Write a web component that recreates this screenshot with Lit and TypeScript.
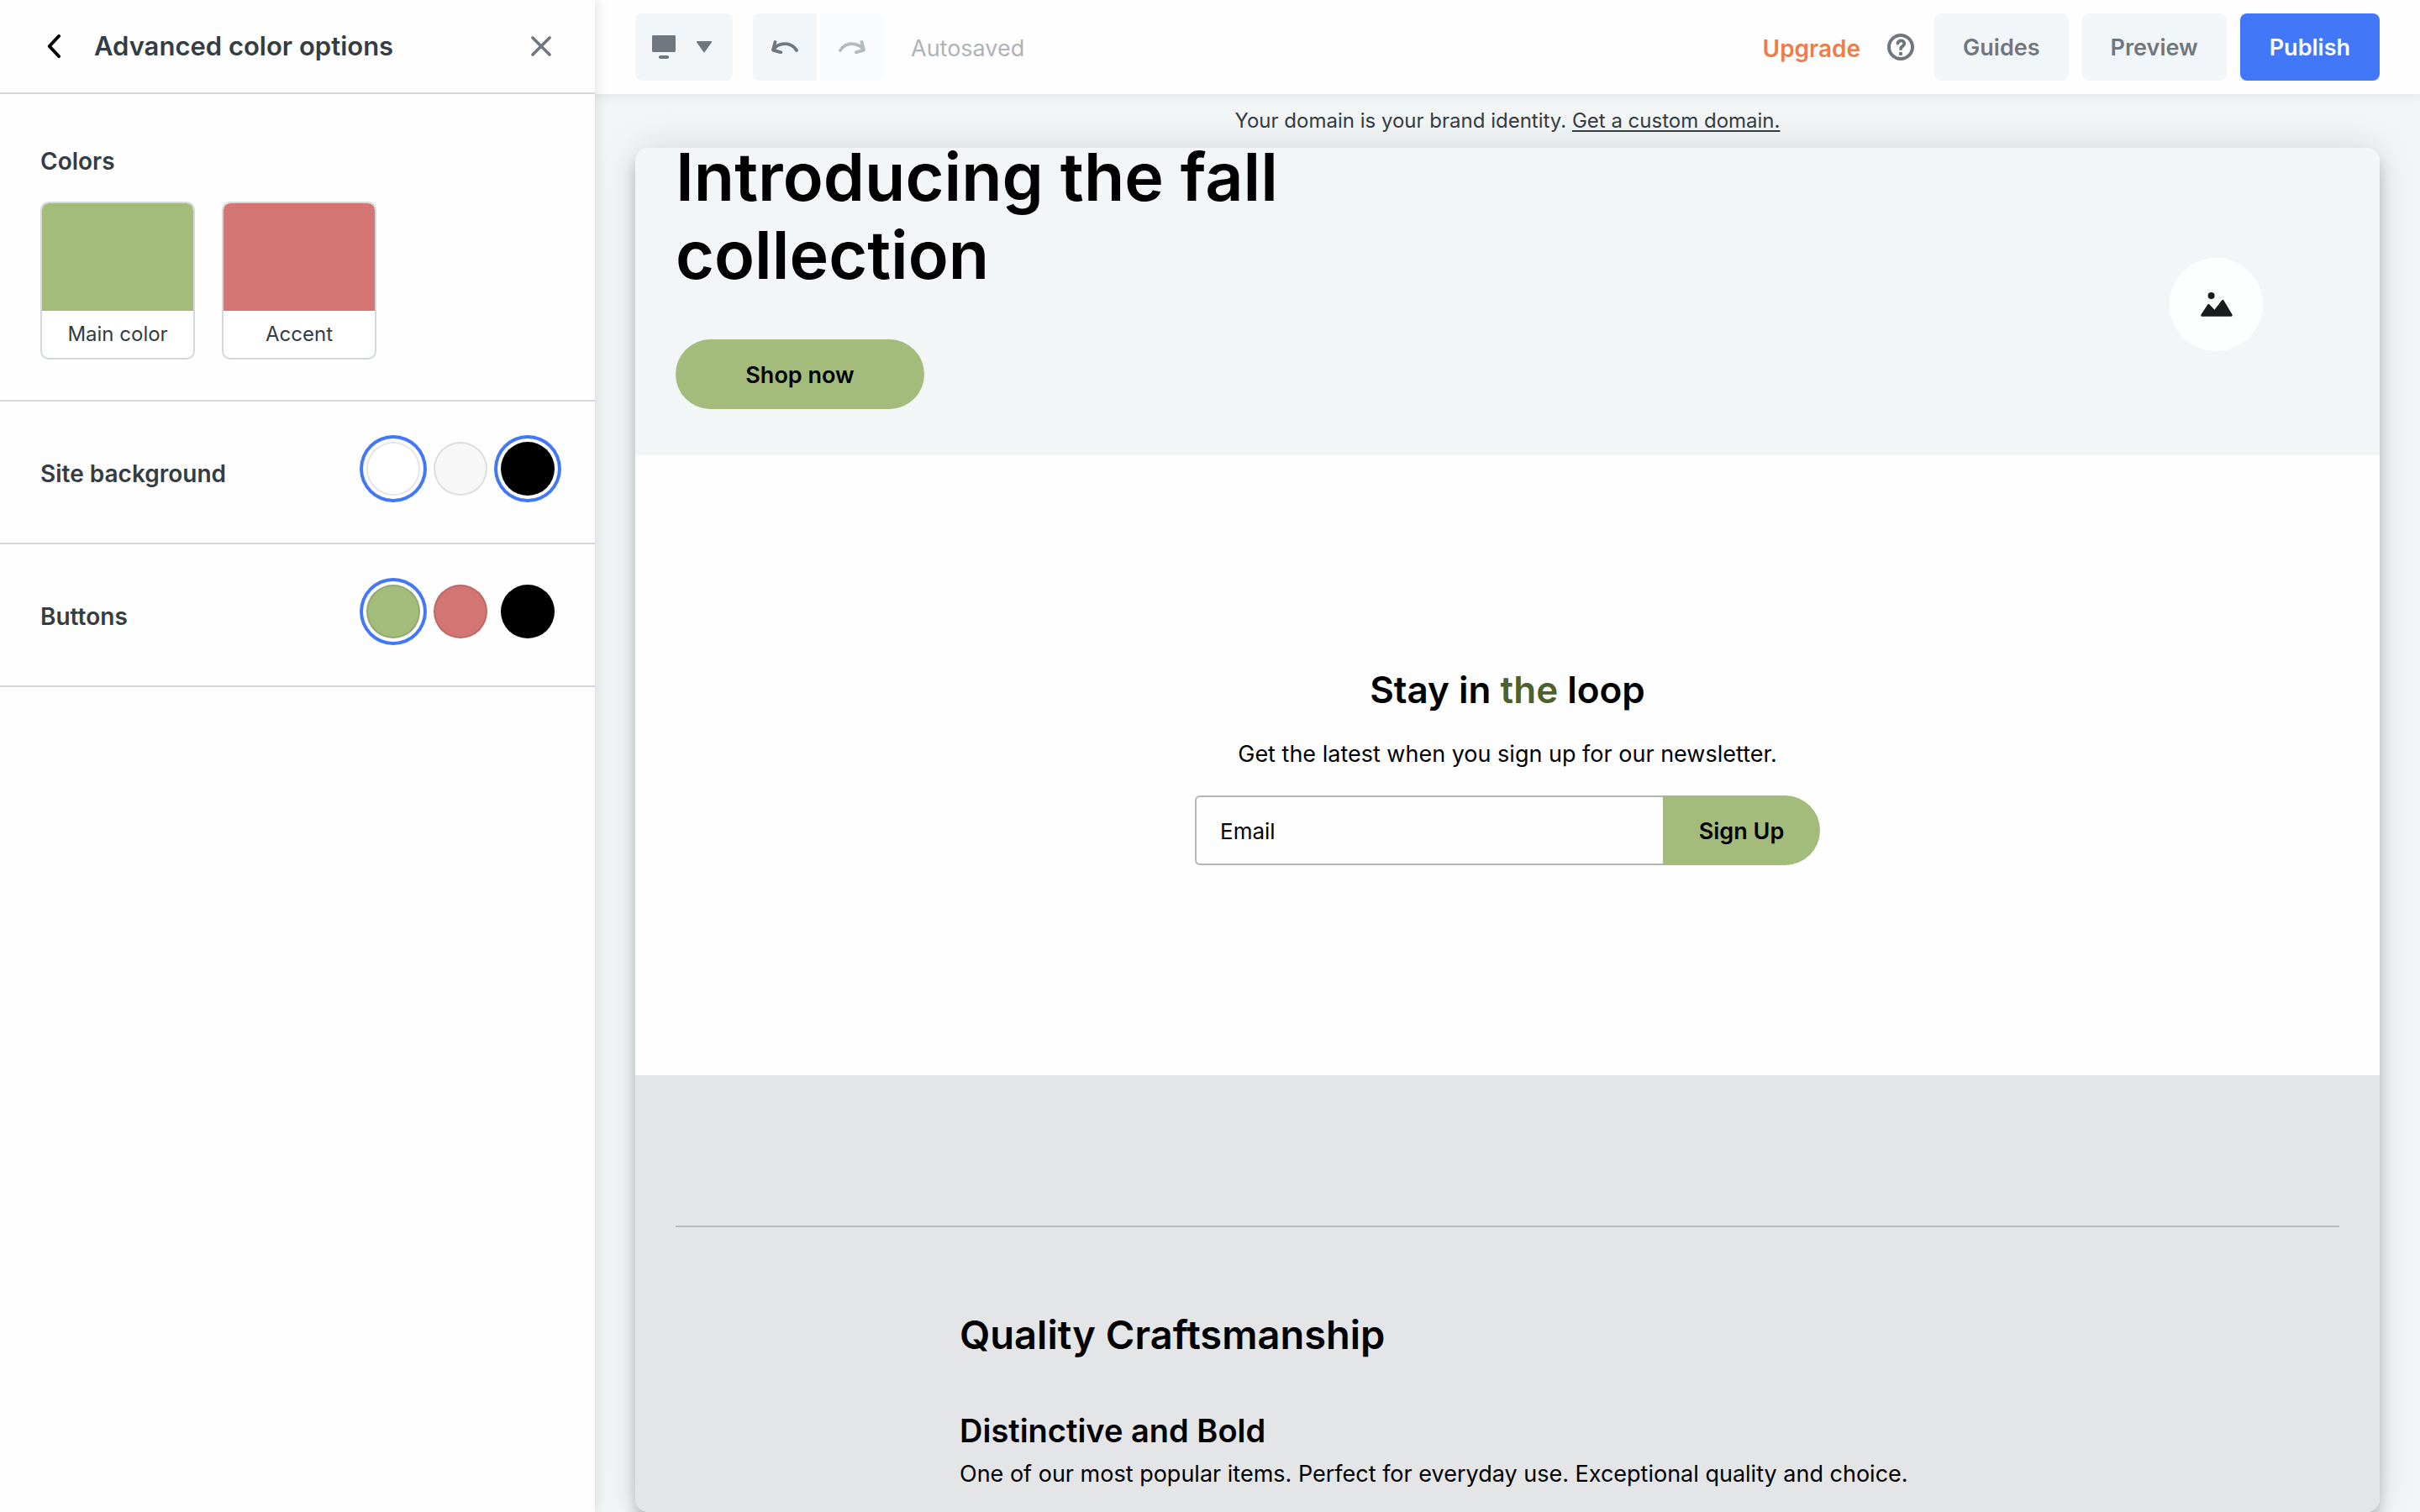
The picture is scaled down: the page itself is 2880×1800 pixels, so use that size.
import { LitElement, html, svg, css } from "lit";
import { customElement, property, state } from "lit/decorators.js";
import { styleMap } from "lit/directives/style-map.js";

interface Swatch {
  name: string;
  color: string;
  selected: boolean;
}

const backIcon = svg`<svg class="icon" width="16" height="28" viewBox="0 0 16 28" aria-hidden="true">
  <path d="M14 2 2.8 14 14 26" fill="none" stroke="#000" stroke-width="4" stroke-linecap="round" stroke-linejoin="round"/>
</svg>`;

const closeIcon = svg`<svg class="icon" width="24" height="24" viewBox="0 0 24 24" aria-hidden="true">
  <path d="M2 2 22 22M22 2 2 22" fill="none" stroke="currentColor" stroke-width="3.6" stroke-linecap="round"/>
</svg>`;

const monitorIcon = svg`<svg class="icon" width="28" height="28" viewBox="0 0 28 28" aria-hidden="true">
  <rect width="28" height="20" rx="1.4" fill="currentColor"/>
  <rect x="8" y="24" width="12" height="4" rx="1.8" fill="currentColor"/>
</svg>`;

const caretIcon = svg`<svg class="icon" width="18" height="14" viewBox="0 0 18 14" aria-hidden="true">
  <path d="M1.2 0h15.6c1 0 1.5.9.9 1.7L9.7 13c-.4.6-1 .6-1.4 0L.3 1.7C-.3.9.2 0 1.2 0Z" fill="currentColor"/>
</svg>`;

const undoIcon = svg`<svg class="icon" width="32" height="16" viewBox="0 0 32 16" aria-hidden="true">
  <path d="M4.5 2 2 11.6 11.2 14.3M2.4 11.4C8.5 2 23.5 1.4 30 12" fill="none" stroke="currentColor" stroke-width="3.8" stroke-linecap="round" stroke-linejoin="round"/>
</svg>`;

const redoIcon = svg`<svg class="icon" width="32" height="16" viewBox="0 0 32 16" aria-hidden="true">
  <path d="M27.5 2 30 11.6 20.8 14.3M29.6 11.4C23.5 2 8.5 1.4 2 12" fill="none" stroke="currentColor" stroke-width="3.8" stroke-linecap="round" stroke-linejoin="round"/>
</svg>`;

const helpIcon = svg`<svg class="icon" width="32" height="32" viewBox="0 0 32 32" aria-hidden="true">
  <circle cx="16" cy="16" r="14" fill="none" stroke="currentColor" stroke-width="4"/>
  <path d="M12.4 11.6C13 9.3 14.5 8.4 16.4 8.4c2.2 0 3.9 1.5 3.9 3.5 0 3-4.2 3-4.2 6.3" fill="none" stroke="currentColor" stroke-width="3.8" stroke-linecap="round"/>
  <circle cx="16" cy="23.9" r="2.2" fill="currentColor"/>
</svg>`;

const pictureIcon = svg`<svg class="icon" width="38" height="29" viewBox="0 0 38 29" aria-hidden="true">
  <circle cx="12.6" cy="4" r="4" fill="currentColor"/>
  <path d="M.6 26.2 8.3 14.5c.6-.9 1.5-.9 2.2-.1l6 6.4 8.6-11.4c.7-.8 1.7-.8 2.3.1l10 16.7c.7 1.3.2 2.6-1.1 2.6H1.6C.3 28.8-.1 27.4.6 26.2Z" fill="currentColor"/>
</svg>`;

const shared = css`
  *, *::before, *::after { box-sizing: border-box; }
  h1, h2, h3, p { margin: 0; }
  button, input { font-family: inherit; margin: 0; }
  button { border: 0; padding: 0; background: none; color: inherit; cursor: pointer; }
  .icon { display: block; flex: none; }
`;

@customElement("swatch-row")
class SwatchRow extends LitElement {
  @property() label = "";
  @property() kind: "checkbox" | "radio" = "radio";
  @property({ attribute: false }) swatches: Swatch[] = [];

  static styles = [shared, css`
    :host { display: block; border-bottom: 2px solid #d3d8dc; padding: 48px 48px 56px; }
    .row { display: flex; align-items: flex-end; justify-content: space-between; }
    .label { font-size: 28px; line-height: 52px; font-weight: 600; color: #343c44; }
    .choices { display: flex; gap: 16px; }
    .dot {
      appearance: none; width: 64px; height: 64px; border-radius: 50%;
      border: 2px solid rgba(0, 0, 0, 0.1); cursor: pointer;
    }
    .dot:checked { box-shadow: 0 0 0 4px #fff, 0 0 0 8px #4277f8; }
  `];

  render() {
    return html`
      <div class="row" role="group" aria-labelledby="label">
        <span class="label" id="label">${this.label}</span>
        <div class="choices">
          ${this.swatches.map((s) => html`<input class="dot" type=${this.kind} name="swatch"
            aria-label=${s.name} .checked=${s.selected} style=${styleMap({ backgroundColor: s.color })}>`)}
        </div>
      </div>`;
  }
}

@customElement("color-panel")
class ColorPanel extends LitElement {
  @state() private colors = [
    { name: "Main color", color: "#a3bc7c" },
    { name: "Accent", color: "#d37572" },
  ];

  @state() private backgrounds: Swatch[] = [
    { name: "White", color: "#ffffff", selected: true },
    { name: "Light gray", color: "#f7f7f7", selected: false },
    { name: "Black", color: "#000000", selected: true },
  ];

  @state() private buttons: Swatch[] = [
    { name: "Main color", color: "#a3bc7c", selected: true },
    { name: "Accent", color: "#d37572", selected: false },
    { name: "Black", color: "#000000", selected: false },
  ];

  static styles = [shared, css`
    :host { display: block; background: #fefefe; color: #343c44; }
    .head {
      display: flex; align-items: center; height: 112px; padding: 0 52px 0 56px;
      border-bottom: 2px solid #d3d8dc;
    }
    .title { flex: 1; margin-left: 40px; font-size: 31px; line-height: 40px; font-weight: 600; }
    .close { color: #70777f; }
    .colors { padding: 64px 48px 48px; border-bottom: 2px solid #d3d8dc; }
    .label { font-size: 28px; line-height: 32px; font-weight: 600; }
    .cards { display: flex; gap: 32px; margin-top: 32px; }
    .card {
      display: flex; flex-direction: column; width: 184px; overflow: hidden;
      border: 2px solid #d3d8dc; border-radius: 10px; background: #fff;
      font-size: 24px; line-height: 56px; text-align: center;
    }
    .fill { height: 128px; border-radius: 8px 8px 0 0; }
  `];

  render() {
    return html`
      <header class="head">
        <button aria-label="Back">${backIcon}</button>
        <h1 class="title">Advanced color options</h1>
        <button class="close" aria-label="Close">${closeIcon}</button>
      </header>
      <section class="colors">
        <h2 class="label">Colors</h2>
        <div class="cards">
          ${this.colors.map((c) => html`<button class="card">
            <span class="fill" style=${styleMap({ backgroundColor: c.color })}></span>
            <span>${c.name}</span>
          </button>`)}
        </div>
      </section>
      <swatch-row label="Site background" kind="checkbox" .swatches=${this.backgrounds}></swatch-row>
      <swatch-row label="Buttons" kind="radio" .swatches=${this.buttons}></swatch-row>`;
  }
}

@customElement("editor-toolbar")
class EditorToolbar extends LitElement {
  static styles = [shared, css`
    :host {
      display: flex; align-items: center; justify-content: space-between; height: 112px; flex: none;
      padding: 0 48px; background: #fefefe; box-shadow: 0 0 16px rgba(0, 0, 0, 0.1);
      font-size: 27px; line-height: 40px;
    }
    .group { display: flex; align-items: center; }
    .tool {
      display: flex; align-items: center; justify-content: center; height: 80px;
      background: #f3f6f8; color: #70777f;
    }
    .device { gap: 25px; width: 116px; padding-right: 5px; border-radius: 8px; }
    .undo { width: 76px; margin-left: 24px; border-radius: 8px 0 0 8px; }
    .redo { width: 76px; margin-left: 4px; border-radius: 0 8px 8px 0; background: #fafbfc; color: #b4bbbb; }
    .saved { margin-left: 32px; padding-top: 4px; color: #aeb3b8; }
    .upgrade { padding-top: 4px; color: #ee7c48; font-size: 28px; font-weight: 600; text-decoration: none; }
    .help { margin: 0 24px 0 32px; color: #70777f; }
    .action {
      height: 80px; padding: 0 34px; border-radius: 8px; background: #f3f6f8; color: #70777f;
      font-size: 27px; font-weight: 600;
    }
    .action + .action { margin-left: 16px; }
    .action.publish { padding: 0 35px; background: #4277f8; color: #fff; }
  `];

  render() {
    return html`
      <div class="group">
        <button class="tool device" aria-label="Choose device">${monitorIcon}${caretIcon}</button>
        <button class="tool undo" aria-label="Undo">${undoIcon}</button>
        <button class="tool redo" aria-label="Redo">${redoIcon}</button>
        <span class="saved">Autosaved</span>
      </div>
      <div class="group">
        <a class="upgrade" href="#upgrade">Upgrade</a>
        <button class="help" aria-label="Help">${helpIcon}</button>
        <button class="action">Guides</button>
        <button class="action">Preview</button>
        <button class="action publish">Publish</button>
      </div>`;
  }
}

@customElement("site-preview")
class SitePreview extends LitElement {
  static styles = [shared, css`
    :host {
      display: flex; flex-direction: column; overflow: hidden; border-radius: 16px;
      background: #fefefe; color: #000;
      box-shadow: 0 12px 16px rgba(0, 0, 0, 0.2), 0 0 48px rgba(0, 0, 0, 0.12);
    }
    .hero {
      display: flex; align-items: flex-end; justify-content: space-between; flex: none;
      height: 366px; padding: 0 139px 55px 48px; background: #f3f6f7;
    }
    .headline { max-width: 900px; font-size: 79px; line-height: 93px; font-weight: 600; }
    .pill {
      height: 83px; padding-top: 2px; border-radius: 42px; background: #a3bc7c; color: #000;
      font-size: 27px; font-weight: 600;
    }
    .shop { width: 296px; margin-top: 54px; }
    .picture {
      display: flex; align-items: center; justify-content: center; flex: none;
      width: 111px; height: 111px; margin-bottom: 69px; border-radius: 50%;
      background: #fdfefe; color: #1a1b1d;
    }
    .news {
      display: flex; flex-direction: column; align-items: center; flex: none;
      padding: 250px 48px; text-align: center;
    }
    .loop { font-size: 44px; line-height: 58px; font-weight: 600; }
    .tint { color: #4b622f; }
    .text { font-size: 27px; line-height: 40px; }
    .news .text { margin: 28px 0 29px; }
    .form { display: flex; width: 744px; max-width: 100%; }
    .email {
      flex: 1; min-width: 0; height: 83px; padding: 2px 28px 0; border: 2px solid #b3b5b6;
      border-right: 0; border-radius: 6px 0 0 6px; background: transparent;
      font-size: 26px; color: #000; outline: 0;
    }
    .email::placeholder { color: #000; opacity: 1; }
    .signup { width: 187px; border-radius: 0 42px 42px 0; }
    .about { flex: 1; padding: 179px 48px 0; background: #e4e5e7; }
    .rule { height: 2px; margin: 0; border: 0; background: #b8b9bb; }
    .column { max-width: 1304px; margin: 98px auto 0; }
    .quality { font-size: 47px; line-height: 60px; font-weight: 600; }
    .item { margin: 60px 0 8px; font-size: 38px; line-height: 48px; font-weight: 600; }
  `];

  render() {
    return html`
      <section class="hero">
        <div>
          <h1 class="headline">Introducing the fall collection</h1>
          <button class="pill shop">Shop now</button>
        </div>
        <button class="picture" aria-label="Replace image">${pictureIcon}</button>
      </section>
      <section class="news">
        <h2 class="loop">Stay in <span class="tint">the</span> loop</h2>
        <p class="text">Get the latest when you sign up for our newsletter.</p>
        <form class="form" @submit=${(e: Event) => e.preventDefault()}>
          <input class="email" type="email" aria-label="Email" placeholder="Email">
          <button class="pill signup">Sign Up</button>
        </form>
      </section>
      <section class="about">
        <hr class="rule">
        <div class="column">
          <h2 class="quality">Quality Craftsmanship</h2>
          <h3 class="item">Distinctive and Bold</h3>
          <p class="text">One of our most popular items. Perfect for everyday use. Exceptional quality and choice.</p>
        </div>
      </section>`;
  }
}

@customElement("app-root")
class AppRoot extends LitElement {
  static styles = [shared, css`
    :host {
      display: flex; height: 100vh; overflow: hidden; background: #f2f6f7;
      font-family: Inter, "Liberation Sans", sans-serif; color: #343c44;
    }
    .side { width: 708px; flex: none; z-index: 2; box-shadow: 0 0 16px rgba(0, 0, 0, 0.14); }
    .main { display: flex; flex-direction: column; flex: 1; min-width: 0; }
    .bar { z-index: 1; }
    .domain { flex: none; font-size: 24px; line-height: 64px; text-align: center; }
    .link { color: inherit; text-underline-offset: 3px; text-decoration-thickness: 2px; }
    .site { flex: 1; min-height: 0; margin: 0 48px; }
  `];

  render() {
    return html`
      <color-panel class="side"></color-panel>
      <main class="main">
        <editor-toolbar class="bar"></editor-toolbar>
        <p class="domain">Your domain is your brand identity. <a class="link" href="#domain">Get a custom domain.</a></p>
        <site-preview class="site"></site-preview>
      </main>`;
  }
}
